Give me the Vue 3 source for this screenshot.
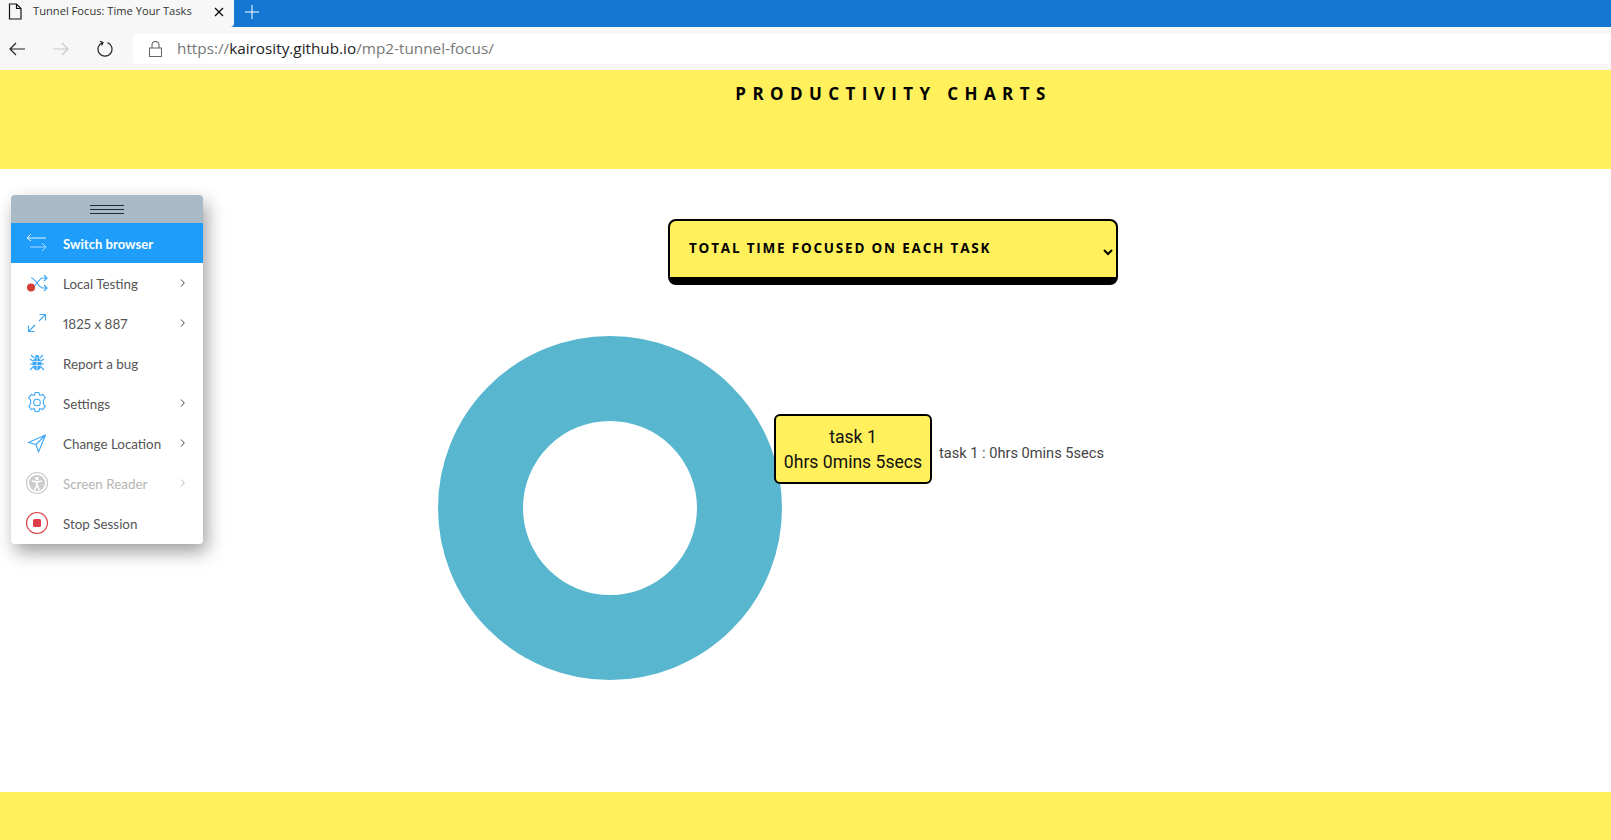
<template>
  <div class="page">
    <div class="tabstrip">
      <div class="tab">
        <svg class="tab__page" width="14" height="17" viewBox="0 0 14 17"><path d="M1.5 1h7l4.500 4.500V16h-11.500zM8.500 1v4.500H13" fill="none" stroke="#111" stroke-width="1.2"/></svg>
        <span class="tab__title">Tunnel Focus: Time Your Tasks</span>
        <svg class="tab__close" width="10" height="10" viewBox="0 0 10 10"><path d="M1 1l8 8M9 1l-8 8" stroke="#111" stroke-width="1.400"/></svg>
      </div>
      <svg class="tabstrip__plus" width="14" height="14" viewBox="0 0 14 14"><path d="M7 0v14M0 7h14" stroke="#fff" stroke-width="1"/></svg>
    </div>

    <div class="toolbar">
      <svg class="toolbar__back" width="16" height="14" viewBox="0 0 16 14"><path d="M7 1L1 7l6 6M1 7h15" fill="none" stroke="#222" stroke-width="1.200"/></svg>
      <svg class="toolbar__forward" width="16" height="14" viewBox="0 0 16 14"><path d="M9 1l6 6-6 6M15 7H0" fill="none" stroke="#c9c9c9" stroke-width="1.200"/></svg>
      <svg class="toolbar__reload" width="16" height="17" viewBox="0 0 16 17"><path d="M5.500 2.600A7 7 0 1 0 10.500 2.600M3 1.200l3 1.400-1.400 3" fill="none" stroke="#222" stroke-width="1.200"/></svg>
      <div class="address">
        <svg width="13" height="16" viewBox="0 0 13 16"><path d="M.5 7h12v8.500H.5zM3 7V4a3.500 3.500 0 0 1 7 0v3" fill="none" stroke="#666" stroke-width="1.100"/></svg>
        <span class="address__url">https://<b>kairosity.github.io</b>/mp2-tunnel-focus/</span>
      </div>
    </div>

    <header class="banner">
      <h1 class="banner__title">PRODUCTIVITY CHARTS</h1>
    </header>

    <main class="content">
      <select class="chart-select">
        <option>TOTAL TIME FOCUSED ON EACH TASK</option>
      </select>

      <div class="chart">
        <svg class="chart__donut" width="344" height="344" viewBox="0 0 344 344">
          <circle cx="172" cy="172" r="129.500" fill="none" stroke="#58b6cf" stroke-width="85"/>
        </svg>
        <div class="chart__tooltip">
          <div>task 1</div>
          <div>0hrs 0mins 5secs</div>
        </div>
        <span class="chart__legend">task 1 : 0hrs 0mins 5secs</span>
      </div>

      <aside class="side-menu">
        <div class="side-menu__handle"><span></span></div>
        <div v-for="item in menuItems" :key="item.label" class="side-menu__item" :class="item.mod">
          <span class="side-menu__icon">
            <svg width="28" height="28" viewBox="0 0 28 28" fill="none" v-html="item.icon"></svg>
          </span>
          <span class="side-menu__label">{{ item.label }}</span>
          <svg v-if="item.more" class="side-menu__more" width="5" height="8" viewBox="0 0 5 8"><path d="M1 .5L4.300 4 1 7.500" fill="none" stroke="currentColor" stroke-width="1"/></svg>
        </div>
      </aside>
    </main>

    <footer class="footer"></footer>
  </div>
</template>

<script setup>
const blue = '#3ba7f5'
const menuItems = [
  {
    label: 'Switch browser',
    mod: 'is-active',
    icon: '<path d="M8 5L4 9l4 3M4 9h19" stroke="#e4f3ff" stroke-width="1"/><path d="M19 14l4 4-4 4M23 18H7" stroke="#a9d9ff" stroke-width="1"/>'
  },
  {
    label: 'Local Testing',
    more: true,
    icon: `<path d="M8 9c5 0 7 10 12 10h4M8 19c5 0 7-10 12-10h4M21 6l3 3-3 3M21 16l3 3-3 3" stroke="${blue}" stroke-width="1.100"/><circle cx="8" cy="18.500" r="4" fill="#d13f36"/>`
  },
  {
    label: '1825 x 887',
    more: true,
    icon: `<path d="M16 12l6-6M16.500 5.500h6v6M12 16l-6 6M5.500 16.500v6h6" stroke="${blue}" stroke-width="1.100"/>`
  },
  {
    label: 'Report a bug',
    icon: `<ellipse cx="14" cy="15" rx="4.500" ry="6.500" fill="${blue}"/><path d="M11.500 8.500a2.500 2.500 0 0 1 5 0z" fill="${blue}"/><path d="M8 6l3 3M20 6l-3 3M7 10l3 2M21 10l-3 2M7 15h3M18 15h3M7 21l3-3M21 21l-3-3" stroke="${blue}" stroke-width="1.100"/><path d="M14 9v13M10 12.500h8M10 16.500h8" stroke="#fff" stroke-width=".7"/>`
  },
  {
    label: 'Settings',
    more: true,
    icon: `<path d="M12.200 3.500h3.600l.9 2.900 3-1 2.500 3.300-1.800 2.600v3.400l1.800 2.600-2.500 3.300-3-1-.9 2.900h-3.600l-.9-2.900-3 1-2.500-3.300 1.800-2.600v-3.400L5.800 8.700l2.500-3.300 3 1z" stroke="${blue}" stroke-width="1.100" stroke-linejoin="round"/><circle cx="14" cy="13.500" r="3.300" stroke="${blue}" stroke-width="1.100"/>`
  },
  {
    label: 'Change Location',
    more: true,
    icon: `<path d="M22.500 6L5.500 13.500l7.500 2 2.500 7.500zM13 15.500l9.500-9.500" stroke="${blue}" stroke-width="1.100" stroke-linejoin="round"/>`
  },
  {
    label: 'Screen Reader',
    mod: 'is-disabled',
    more: true,
    icon: '<circle cx="14" cy="14" r="10.500" stroke="#ccc" stroke-width="1.200"/><circle cx="14" cy="14" r="8" fill="#ccc"/><circle cx="14" cy="9.500" r="1.700" fill="#fff"/><path d="M9 12l5 1 5-1M14 13v3l-2.500 5M14 16l2.500 5" stroke="#fff" stroke-width="1.500"/>'
  },
  {
    label: 'Stop Session',
    icon: '<circle cx="14" cy="14" r="10.500" stroke="#dc3f47" stroke-width="1.100"/><rect x="10" y="10" width="8" height="8" rx="1.500" fill="#dc3f47"/>'
  }
]
</script>

<style scoped>
.page {
  display: flex;
  flex-direction: column;
  height: 840px;
  overflow: hidden;
  background: #fff;
}

/* browser chrome */
.tabstrip {
  display: flex;
  align-items: center;
  height: 27px;
  background: #1478d2;
}

.tab {
  display: flex;
  align-items: center;
  width: 234px;
  height: 27px;
  padding: 0 10px 4px 8px;
  box-sizing: border-box;
  background: #f7f7f7;
  border-bottom-right-radius: 4px;
}

.tab__title {
  flex: 1;
  margin: 0 0 2px 11px;
  font: 11.150px "Open Sans", sans-serif;
  color: #333;
  white-space: nowrap;
}

.tabstrip__plus {
  margin: 0 0 4px 11px;
}

.toolbar {
  display: flex;
  align-items: center;
  height: 43px;
  background: #f7f7f7;
}

.toolbar__back {
  margin-left: 9px;
}

.toolbar__forward {
  margin-left: 28px;
}

.toolbar__reload {
  margin-left: 28px;
}

.address {
  display: flex;
  align-items: center;
  flex: 1;
  height: 30px;
  margin-left: 20px;
  padding-left: 16px;
  background: #fff;
  border-radius: 4px 0 0 4px;
}

.address__url {
  margin-left: 15px;
  padding-bottom: 2px;
  font: 15.300px "Open Sans", sans-serif;
  color: #777;
}

.address__url b {
  font-weight: 400;
  color: #222;
}

/* page */
.banner {
  height: 99px;
  flex-shrink: 0;
  background: #fff05c;
}

.banner__title {
  margin: 12px 0 0 176px;
  font: 700 17px "Open Sans", sans-serif;
  letter-spacing: 6.400px;
  text-align: center;
  color: #000;
}

.content {
  position: relative;
  flex: 1;
  display: flex;
  flex-direction: column;
  padding-top: 50px;
}

.chart-select {
  width: 450px;
  height: 66px;
  margin-left: 668px;
  padding: 0 15px 3px;
  box-sizing: border-box;
  border: 2px solid #000;
  border-bottom-width: 8px;
  border-radius: 8px;
  background: #fff05c;
  font: 700 13.500px "Open Sans", sans-serif;
  letter-spacing: 1.800px;
  color: #000;
}

.chart {
  position: relative;
  height: 344px;
  margin: 51px 0 0 438px;
}

.chart__donut {
  display: block;
}

.chart__tooltip {
  position: absolute;
  left: 336px;
  top: 78px;
  width: 158px;
  height: 70px;
  padding-top: 9px;
  box-sizing: border-box;
  border: 2px solid #000;
  border-radius: 6px;
  background: #fff05c;
  font: 17.600px/25px Roboto, sans-serif;
  text-align: center;
  color: #111;
}

.chart__legend {
  position: absolute;
  left: 501px;
  top: 108px;
  font: 14.600px Roboto, sans-serif;
  color: #444;
  white-space: nowrap;
}

.footer {
  height: 48px;
  flex-shrink: 0;
  background: #fff05c;
}

/* floating test menu */
.side-menu {
  position: absolute;
  left: 11px;
  top: 26px;
  width: 192px;
  padding-bottom: 1px;
  border-radius: 4px;
  background: #fff;
  box-shadow: 4px 8px 18px rgba(0, 0, 0, 0.38);
  overflow: hidden;
}

.side-menu__handle {
  display: flex;
  align-items: center;
  justify-content: center;
  height: 28px;
  background: #a9bac6;
}

.side-menu__handle span {
  width: 34px;
  height: 7px;
  border-top: 1px solid #1d2b3a;
  border-bottom: 1px solid #1d2b3a;
  background: linear-gradient(#1d2b3a, #1d2b3a) center / 100% 1px no-repeat;
}

.side-menu__item {
  display: flex;
  align-items: center;
  height: 40px;
  padding: 0 18px 0 12px;
  color: #555;
}

.side-menu__item.is-active {
  background: #1e9dfb;
  color: #fff;
}

.side-menu__item.is-disabled {
  color: #b4b4b4;
}

.side-menu__icon {
  display: flex;
  width: 28px;
  height: 28px;
}

.side-menu__label {
  flex: 1;
  margin-left: 12px;
  padding-top: 1px;
  font: 13.400px Lato, sans-serif;
  font-variant-numeric: proportional-nums;
  white-space: nowrap;
}

.is-active .side-menu__label {
  font-size: 13.100px;
  font-weight: 700;
}

.side-menu__more {
  color: #444;
}

.is-disabled .side-menu__more {
  color: #b4b4b4;
}
</style>

<style>
body {
  margin: 0;
}
</style>
